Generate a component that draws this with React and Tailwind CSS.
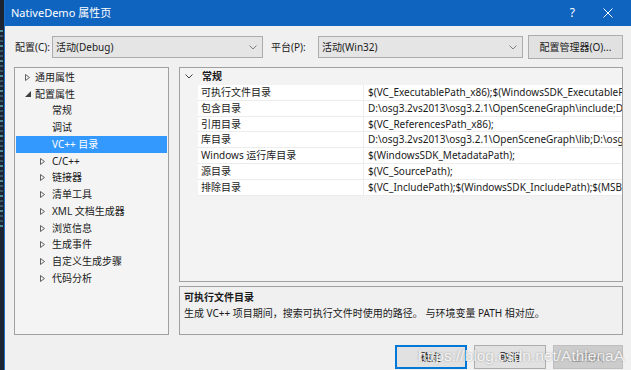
import React from 'react';

const FONT = { fontFamily: '"Noto Sans", "Noto Sans CJK SC", sans-serif' };

function Closed() {
  return (
    <svg width="5" height="7" viewBox="0 0 5 7" className="shrink-0">
      <path d="M0.5 0.5 L4.5 3.5 L0.5 6.5 Z" fill="none" stroke="#606060" strokeWidth="1" />
    </svg>
  );
}

function Open() {
  return (
    <svg width="6" height="6" viewBox="0 0 6 6" className="shrink-0">
      <path d="M6 0 L6 6 L0 6 Z" fill="#404040" />
    </svg>
  );
}

const tree = [
  { label: '通用属性', level: 1, icon: 'closed' },
  { label: '配置属性', level: 1, icon: 'open' },
  { label: '常规', level: 2 },
  { label: '调试', level: 2 },
  { label: 'VC++ 目录', level: 2, selected: true },
  { label: 'C/C++', level: 2, icon: 'closed' },
  { label: '链接器', level: 2, icon: 'closed' },
  { label: '清单工具', level: 2, icon: 'closed' },
  { label: 'XML 文档生成器', level: 2, icon: 'closed' },
  { label: '浏览信息', level: 2, icon: 'closed' },
  { label: '生成事件', level: 2, icon: 'closed' },
  { label: '自定义生成步骤', level: 2, icon: 'closed' },
  { label: '代码分析', level: 2, icon: 'closed' },
];

const props = [
  ['可执行文件目录', '$(VC_ExecutablePath_x86);$(WindowsSDK_ExecutablePath);$(VS_ExecutablePath)'],
  ['包含目录', 'D:\\osg3.2vs2013\\osg3.2.1\\OpenSceneGraph\\include;D:\\osg3.2vs2013'],
  ['引用目录', '$(VC_ReferencesPath_x86);'],
  ['库目录', 'D:\\osg3.2vs2013\\osg3.2.1\\OpenSceneGraph\\lib;D:\\osg3.2vs2013\\3rdParty'],
  ['Windows 运行库目录', '$(WindowsSDK_MetadataPath);'],
  ['源目录', '$(VC_SourcePath);'],
  ['排除目录', '$(VC_IncludePath);$(WindowsSDK_IncludePath);$(MSBuild_ExecutablePath)'],
];

function Combo({ value, className }) {
  return (
    <div className={`flex h-[22px] shrink-0 items-center justify-between border border-[#acacac] bg-[#e5e5e5] pl-[3px] pr-[5px] ${className}`}>
      <span>{value}</span>
      <svg width="8" height="5" viewBox="0 0 8 5">
        <path d="M0.5 0.5 L4 4 L7.5 0.5" fill="none" stroke="#808080" strokeWidth="1" />
      </svg>
    </div>
  );
}

export default function App() {
  return (
    <div className="flex h-[370px] w-[631px] overflow-hidden text-[10px] text-[#1a1a1a]" style={FONT}>
      <div className="flex w-[4px] shrink-0 flex-col gap-[3px] bg-[#1b2430] pt-[30px]">
        {Array.from({ length: 40 }).map((_, i) => (
          <div key={i} className={`h-[2px] w-[3px] ${i % 3 === 0 ? 'bg-[#4e8a9a]' : 'bg-[#3a5468]'}`} />
        ))}
      </div>
      <div className="flex min-w-0 flex-1 flex-col border-l border-[#1f6fc4] bg-[#f0f0f0]">
        <div className="flex h-[26px] shrink-0 items-center bg-[#0f64bf] pl-[6px] pr-[18px] text-[11px] text-white">
          <span className="flex-1">NativeDemo 属性页</span>
          <span className="mr-[28px] text-[12px]">?</span>
          <svg width="10" height="10" viewBox="0 0 10 10">
            <path d="M0.5 0.5 L9.5 9.5 M9.5 0.5 L0.5 9.5" stroke="white" strokeWidth="1" />
          </svg>
        </div>

        <div className="mt-[9px] flex h-[24px] items-center pl-[10px] pr-[8px]">
          <span className="w-[37px] shrink-0">配置(C):</span>
          <Combo value="活动(Debug)" className="w-[211px]" />
          <span className="ml-[8px] w-[47px] shrink-0">平台(P):</span>
          <Combo value="活动(Win32)" className="w-[205px]" />
          <div className="ml-[5px] flex h-[24px] min-w-0 flex-1 items-center justify-center border border-[#adadad] bg-[#e1e1e1] whitespace-nowrap">
            配置管理器(O)...
          </div>
        </div>

        <div className="mt-[8px] flex h-[268px] min-w-0 pl-[9px] pr-[8px]">
          <div className="w-[155px] shrink-0 border border-[#a0a0a0] bg-[#f4f4f4] pt-[1px]">
            {tree.map((t) => (
              <div
                key={t.label}
                className={`mx-[1px] flex h-[16.75px] items-center ${t.selected ? 'bg-[#3399ff] text-white' : ''}`}
              >
                <div className={`flex ${t.level === 1 ? 'ml-[9px] w-[10px]' : 'ml-[24px] w-[12px]'}`}>
                  {t.icon === 'closed' && <Closed />}
                  {t.icon === 'open' && <Open />}
                </div>
                <span className="whitespace-nowrap">{t.label}</span>
              </div>
            ))}
          </div>

          <div className="ml-[10px] flex min-w-0 flex-1 flex-col gap-[4px]">
            <div className="flex h-[215px] flex-col overflow-hidden border border-[#a0a0a0] bg-[#f3f3f3]">
              <div className="flex h-[17px] shrink-0 items-center">
                <div className="flex w-[18px] justify-center">
                  <svg width="8" height="5" viewBox="0 0 8 5">
                    <path d="M0.5 0.5 L4 4 L7.5 0.5" fill="none" stroke="#404040" strokeWidth="1" />
                  </svg>
                </div>
                <span className="ml-[4px] font-bold">常规</span>
              </div>
              {props.map(([k, v]) => (
                <div key={k} className="flex h-[15.8px] shrink-0 items-center">
                  <div className="w-[18px] shrink-0 self-stretch" />
                  <div className="flex w-[166px] shrink-0 items-center self-stretch border-b border-r border-[#ececec] bg-white pl-[3px] whitespace-nowrap">
                    {k}
                  </div>
                  <div className="flex min-w-0 flex-1 items-center self-stretch overflow-hidden border-b border-[#ececec] bg-white pl-[4px] whitespace-nowrap">
                    {v}
                  </div>
                </div>
              ))}
            </div>
            <div className="h-[49px] border border-[#a0a0a0] bg-[#f0f0f0] px-[4px] pt-[2px] leading-[16px]">
              <div className="font-bold">可执行文件目录</div>
              <div>生成 VC++ 项目期间，搜索可执行文件时使用的路径。 与环境变量 PATH 相对应。</div>
            </div>
          </div>
        </div>

        <div className="relative mt-[10px] flex justify-end gap-[7px] pr-[8px]">
          <div className="flex h-[24px] w-[72px] items-center justify-center border-2 border-[#0078d7] bg-[#e1e1e1]">确定</div>
          <div className="flex h-[24px] w-[72px] items-center justify-center border border-[#adadad] bg-[#e1e1e1]">取消</div>
          <div className="flex h-[24px] w-[70px] items-center justify-center border border-[#bfbfbf] bg-[#cccccc] text-[#9a9a9a]">应用(A)</div>
          <div
            className="pointer-events-none absolute right-[7px] top-[-1px] text-[15.5px] text-white/85 [text-shadow:0_0_2px_rgba(0,0,0,0.35)]"
            style={{ fontFamily: '"Liberation Sans", sans-serif' }}
          >
            https://blog.csdn.net/AthlenaA
          </div>
        </div>
      </div>
    </div>
  );
}
